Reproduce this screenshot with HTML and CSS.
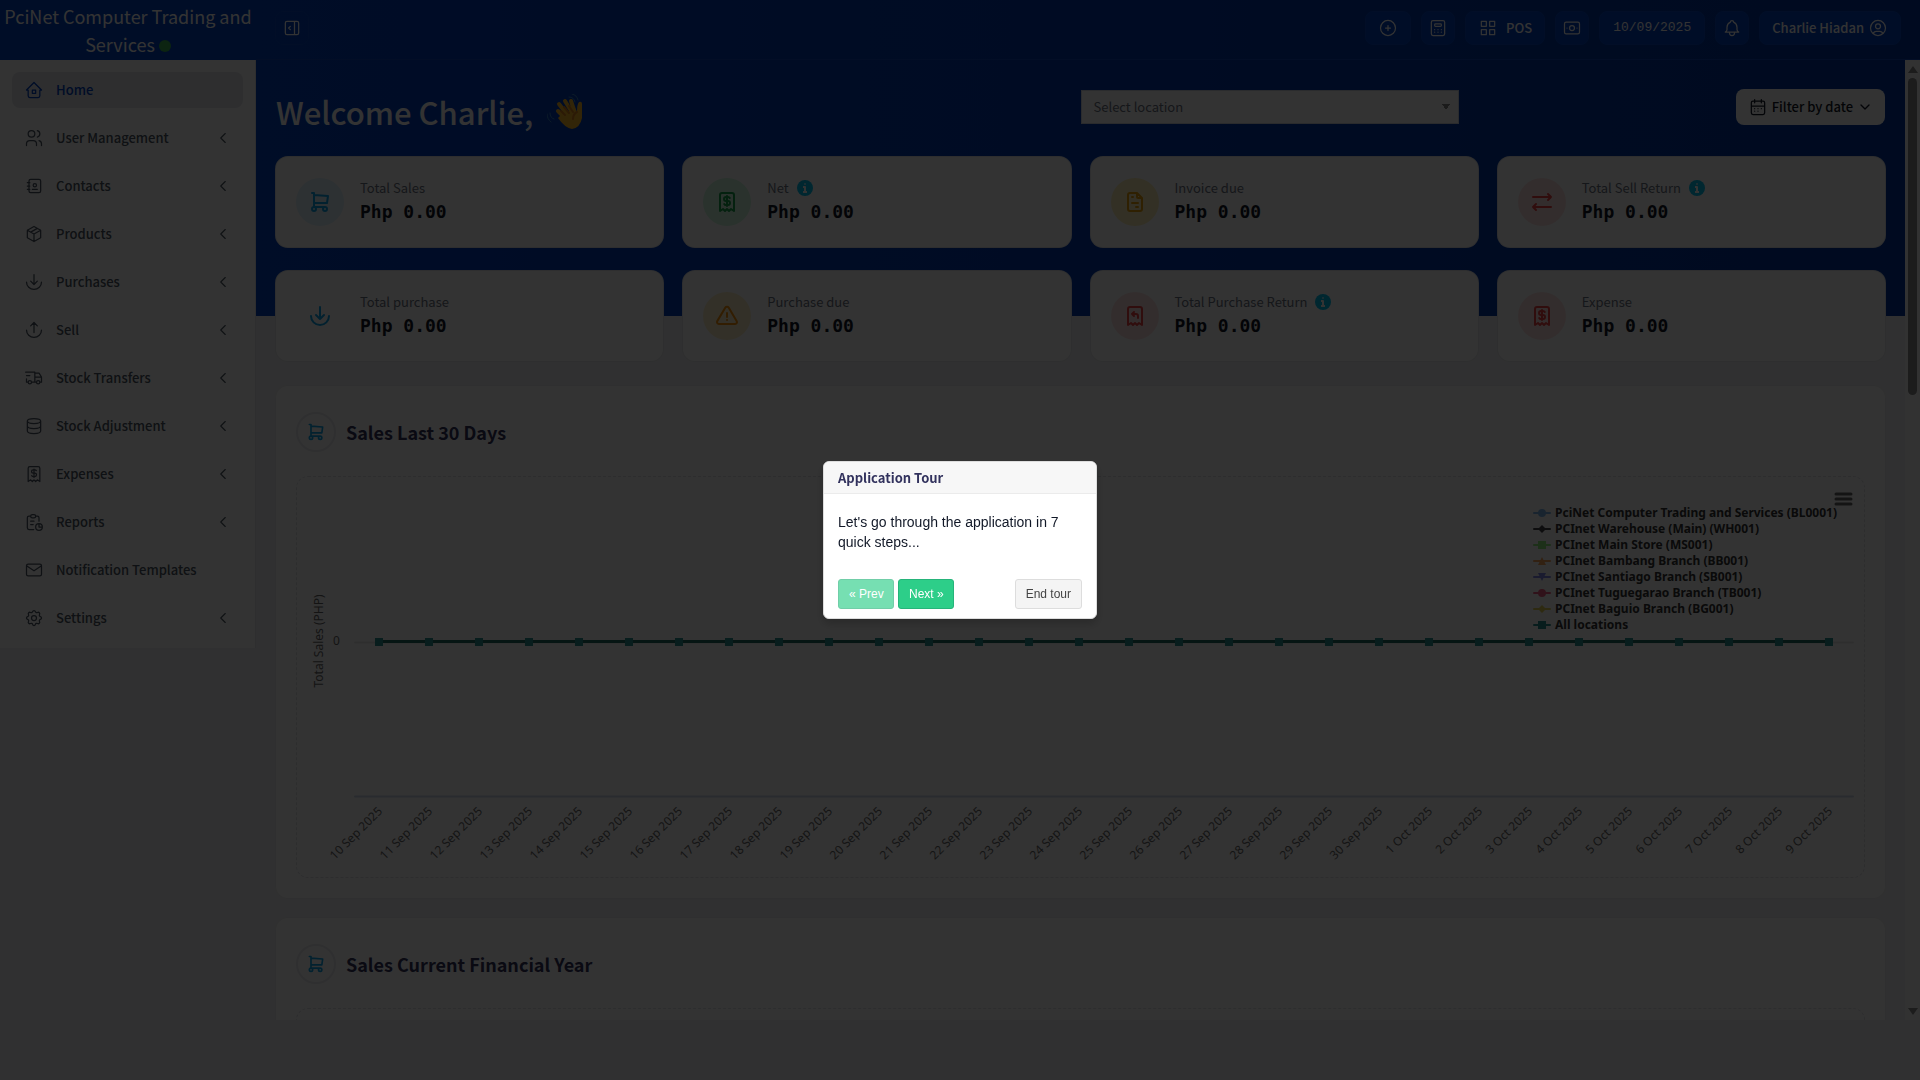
FILE: index.html
```html
<!DOCTYPE html>
<html lang="en">
<head>
<meta charset="utf-8">
<meta name="viewport" content="width=device-width, initial-scale=1">
<title>Home - PciNet Computer Trading and Services</title>
<link rel="stylesheet" href="styles.css">
</head>
<body>
<svg class="sprite" aria-hidden="true">
  <symbol id="i-home" viewBox="0 0 24 24"><path d="M5 12H3l9-9 9 9h-2M5 12v7a2 2 0 0 0 2 2h10a2 2 0 0 0 2-2v-7M10 12h4v4h-4z"/></symbol>
  <symbol id="i-users" viewBox="0 0 24 24"><path d="M9 7m-4 0a4 4 0 1 0 8 0a4 4 0 1 0-8 0M3 21v-2a4 4 0 0 1 4-4h4a4 4 0 0 1 4 4v2M16 3.130a4 4 0 0 1 0 7.750M21 21v-2a4 4 0 0 0-3-3.850"/></symbol>
  <symbol id="i-book" viewBox="0 0 24 24"><path d="M20 6v12a2 2 0 0 1-2 2H8a2 2 0 0 1-2-2V6a2 2 0 0 1 2-2h10a2 2 0 0 1 2 2zM10 16h6M13 11m-2 0a2 2 0 1 0 4 0a2 2 0 1 0-4 0M4 8h3M4 12h3M4 16h3"/></symbol>
  <symbol id="i-box" viewBox="0 0 24 24"><path d="M12 3l8 4.500v9L12 21l-8-4.500v-9zM12 12l8-4.500M12 12v9M12 12L4 7.500M16 5.250l-8 4.500"/></symbol>
  <symbol id="i-down" viewBox="0 0 24 24"><path d="M12 3v12M16 11l-4 4-4-4M3 12a9 9 0 0 0 18 0"/></symbol>
  <symbol id="i-up" viewBox="0 0 24 24"><path d="M12 15V3M16 7l-4-4-4 4M3 12a9 9 0 0 0 18 0"/></symbol>
  <symbol id="i-truck" viewBox="0 0 24 24"><path d="M7 17m-2 0a2 2 0 1 0 4 0a2 2 0 1 0-4 0M17 17m-2 0a2 2 0 1 0 4 0a2 2 0 1 0-4 0M5 17H3v-4M2 5h11v12M9 17h6M19 17h2v-6h-8M13 6h5l3 5M3 9h4"/></symbol>
  <symbol id="i-db" viewBox="0 0 24 24"><path d="M12 6m-8 0a8 3 0 1 0 16 0a8 3 0 1 0-16 0M4 6v6a8 3 0 0 0 16 0V6M4 12v6a8 3 0 0 0 16 0v-6"/></symbol>
  <symbol id="i-receipt" viewBox="0 0 24 24"><path d="M5 21V5a2 2 0 0 1 2-2h10a2 2 0 0 1 2 2v16l-3-2-2 2-2-2-2 2-2-2zM14.800 8A2 2 0 0 0 13 7h-2a2 2 0 1 0 0 4h2a2 2 0 1 1 0 4h-2a2 2 0 0 1-1.800-1M12 6v10"/></symbol>
  <symbol id="i-refund" viewBox="0 0 24 24"><path d="M5 21V5a2 2 0 0 1 2-2h10a2 2 0 0 1 2 2v16l-3-2-2 2-2-2-2 2-2-2zM15 14v-2a2 2 0 0 0-2-2H9l2-2M11 12l-2-2"/></symbol>
  <symbol id="i-report" viewBox="0 0 24 24"><path d="M8 5H6a2 2 0 0 0-2 2v12a2 2 0 0 0 2 2h5.700M18 14v4h4M18 11V7a2 2 0 0 0-2-2h-2M8 5a2 2 0 0 1 2-2h2a2 2 0 0 1 0 4h-2a2 2 0 0 1-2-2M18 18m-4 0a4 4 0 1 0 8 0a4 4 0 1 0-8 0M8 11h4M8 15h3"/></symbol>
  <symbol id="i-mail" viewBox="0 0 24 24"><path d="M5 5h14a2 2 0 0 1 2 2v10a2 2 0 0 1-2 2H5a2 2 0 0 1-2-2V7a2 2 0 0 1 2-2zM3 7l9 6 9-6"/></symbol>
  <symbol id="i-gear" viewBox="0 0 24 24"><path d="M10.325 4.317c.426-1.756 2.924-1.756 3.350 0a1.724 1.724 0 0 0 2.573 1.066c1.543-.940 3.310.826 2.370 2.370a1.724 1.724 0 0 0 1.065 2.572c1.756.426 1.756 2.924 0 3.350a1.724 1.724 0 0 0-1.066 2.573c.940 1.543-.826 3.310-2.370 2.370a1.724 1.724 0 0 0-2.572 1.065c-.426 1.756-2.924 1.756-3.350 0a1.724 1.724 0 0 0-2.573-1.066c-1.543.940-3.310-.826-2.370-2.370a1.724 1.724 0 0 0-1.065-2.572c-1.756-.426-1.756-2.924 0-3.350a1.724 1.724 0 0 0 1.066-2.573c-.940-1.543.826-3.310 2.370-2.370c1 .608 2.296.070 2.572-1.065zM9 12a3 3 0 1 0 6 0a3 3 0 0 0-6 0"/></symbol>
  <symbol id="i-left" viewBox="0 0 24 24"><path d="M15 6l-6 6 6 6"/></symbol>
  <symbol id="i-chev" viewBox="0 0 24 24"><path d="M6 9l6 6 6-6"/></symbol>
  <symbol id="i-panel" viewBox="0 0 24 24"><path d="M6 4h12a2 2 0 0 1 2 2v12a2 2 0 0 1-2 2H6a2 2 0 0 1-2-2V6a2 2 0 0 1 2-2zM15 4v16M10 10l-2 2 2 2"/></symbol>
  <symbol id="i-plus" viewBox="0 0 24 24"><path d="M3 12a9 9 0 1 0 18 0a9 9 0 1 0-18 0M9 12h6M12 9v6"/></symbol>
  <symbol id="i-calc" viewBox="0 0 24 24"><path d="M6 3h12a2 2 0 0 1 2 2v14a2 2 0 0 1-2 2H6a2 2 0 0 1-2-2V5a2 2 0 0 1 2-2zM9 7h6a1 1 0 0 1 1 1v1a1 1 0 0 1-1 1H9a1 1 0 0 1-1-1V8a1 1 0 0 1 1-1zM8 14v.010M12 14v.010M16 14v.010M8 17v.010M12 17v.010M16 17v.010"/></symbol>
  <symbol id="i-grid" viewBox="0 0 24 24"><path d="M4 4h6v6H4zM14 4h6v6h-6zM4 14h6v6H4zM14 14h6v6h-6z"/></symbol>
  <symbol id="i-cash" viewBox="0 0 24 24"><path d="M5 5h14a2 2 0 0 1 2 2v10a2 2 0 0 1-2 2H5a2 2 0 0 1-2-2V7a2 2 0 0 1 2-2zM9 12a3 3 0 1 0 6 0a3 3 0 1 0-6 0M6 12v.010M18 12v.010"/></symbol>
  <symbol id="i-bell" viewBox="0 0 24 24"><path d="M10 5a2 2 0 1 1 4 0a7 7 0 0 1 4 6v3a4 4 0 0 0 2 3H4a4 4 0 0 0 2-3v-3a7 7 0 0 1 4-6M9 17v1a3 3 0 0 0 6 0v-1"/></symbol>
  <symbol id="i-user" viewBox="0 0 24 24"><path d="M3 12a9 9 0 1 0 18 0a9 9 0 1 0-18 0M9 10a3 3 0 1 0 6 0a3 3 0 1 0-6 0M6.168 18.849A4 4 0 0 1 10 16h4a4 4 0 0 1 3.834 2.855"/></symbol>
  <symbol id="i-cal" viewBox="0 0 24 24"><path d="M6 5h12a2 2 0 0 1 2 2v12a2 2 0 0 1-2 2H6a2 2 0 0 1-2-2V7a2 2 0 0 1 2-2zM16 3v4M8 3v4M4 11h16M8 14v.010M12 14v.010M16 14v.010M8 17v.010M12 17v.010"/></symbol>
  <symbol id="i-cart" viewBox="0 0 24 24"><path d="M4 19a2 2 0 1 0 4 0a2 2 0 1 0-4 0M15 19a2 2 0 1 0 4 0a2 2 0 1 0-4 0M17 17H6V3H4M6 5l14 1-1 7H6"/></symbol>
  <symbol id="i-doc" viewBox="0 0 24 24"><path d="M14 3v4a1 1 0 0 0 1 1h4M17 21H7a2 2 0 0 1-2-2V5a2 2 0 0 1 2-2h7l5 5v11a2 2 0 0 1-2 2zM9 7h1M9 13h6M13 17h2"/></symbol>
  <symbol id="i-swap" viewBox="0 0 24 24"><path d="M21 7H3M18 10l3-3-3-3M6 20l-3-3 3-3M3 17h18"/></symbol>
  <symbol id="i-warn" viewBox="0 0 24 24"><path d="M12 9v4M10.363 3.591L2.257 17.125a1.914 1.914 0 0 0 1.636 2.871h16.214a1.914 1.914 0 0 0 1.636-2.870L13.637 3.590a1.914 1.914 0 0 0-3.274 0zM12 16h.010"/></symbol>
  <symbol id="i-info" viewBox="0 0 16 16"><circle cx="8" cy="8" r="8" fill="#00c0ef" stroke="none"/><path d="M6 7h2v5M6 12h4M8 3.500v1" stroke="#fff" stroke-width="2" stroke-linecap="butt"/></symbol>
</svg>

<div class="app">
  <aside class="sidebar">
    <a class="brand" href="#">PciNet Computer Trading and Services <span class="status"></span></a>
    <nav class="menu">
      <a class="item active" href="#"><svg class="icon"><use href="#i-home"/></svg><span>Home</span></a>
      <a class="item" href="#"><svg class="icon"><use href="#i-users"/></svg><span>User Management</span><svg class="icon caret"><use href="#i-left"/></svg></a>
      <a class="item" href="#"><svg class="icon"><use href="#i-book"/></svg><span>Contacts</span><svg class="icon caret"><use href="#i-left"/></svg></a>
      <a class="item" href="#"><svg class="icon"><use href="#i-box"/></svg><span>Products</span><svg class="icon caret"><use href="#i-left"/></svg></a>
      <a class="item" href="#"><svg class="icon"><use href="#i-down"/></svg><span>Purchases</span><svg class="icon caret"><use href="#i-left"/></svg></a>
      <a class="item" href="#"><svg class="icon"><use href="#i-up"/></svg><span>Sell</span><svg class="icon caret"><use href="#i-left"/></svg></a>
      <a class="item" href="#"><svg class="icon"><use href="#i-truck"/></svg><span>Stock Transfers</span><svg class="icon caret"><use href="#i-left"/></svg></a>
      <a class="item" href="#"><svg class="icon"><use href="#i-db"/></svg><span>Stock Adjustment</span><svg class="icon caret"><use href="#i-left"/></svg></a>
      <a class="item" href="#"><svg class="icon"><use href="#i-receipt"/></svg><span>Expenses</span><svg class="icon caret"><use href="#i-left"/></svg></a>
      <a class="item" href="#"><svg class="icon"><use href="#i-report"/></svg><span>Reports</span><svg class="icon caret"><use href="#i-left"/></svg></a>
      <a class="item" href="#"><svg class="icon"><use href="#i-mail"/></svg><span>Notification Templates</span></a>
      <a class="item" href="#"><svg class="icon"><use href="#i-gear"/></svg><span>Settings</span><svg class="icon caret"><use href="#i-left"/></svg></a>
    </nav>
  </aside>

  <div class="page">
    <header class="topbar">
      <button class="tool ghost" aria-label="Toggle sidebar"><svg class="icon"><use href="#i-panel"/></svg></button>
      <div class="tools">
        <button class="tool wide" aria-label="Add"><svg class="icon"><use href="#i-plus"/></svg></button>
        <button class="tool" aria-label="Calculator"><svg class="icon"><use href="#i-calc"/></svg></button>
        <button class="tool pos"><svg class="icon"><use href="#i-grid"/></svg>POS</button>
        <button class="tool" aria-label="Today's profit"><svg class="icon"><use href="#i-cash"/></svg></button>
        <button class="tool date">10/09/2025</button>
        <button class="tool" aria-label="Notifications"><svg class="icon"><use href="#i-bell"/></svg></button>
        <button class="tool user">Charlie Hiadan<svg class="icon"><use href="#i-user"/></svg></button>
      </div>
    </header>

    <div class="scroller">
      <main class="content">
        <section class="hero">
          <div class="welcome">
            <h1>Welcome Charlie,</h1>
            <svg class="wave" viewBox="0 0 36 36" aria-hidden="true">
              <g fill="none" stroke="#3b88c3" stroke-width="1" stroke-linecap="round"><path d="M22 3q5 0 6 5M25 0q5 1 6 6M3 19q0 5 4 6M0 20q0 5 4 8"/></g>
              <g fill="none" stroke="#fbb829" stroke-width="4" stroke-linecap="round"><path d="M11 17l9 9M12 10l10 13M18 7l8 13M24 7l4 12"/></g>
              <path fill="#fbb829" d="M13 22L28 14l2 4q0-8 2-10 3-1 3 2l0 14q-2 10-10 11-7-1-14-11z"/>
              <path fill="none" stroke="#d9801f" d="M14 17l4 4M17 13l5 6M22 12l4 6M30 18q-4 2-4 7"/>
            </svg>
          </div>
          <select class="location" aria-label="Location"><option>Select location</option></select>
          <div class="filter-wrap"><button class="filter"><svg class="icon"><use href="#i-cal"/></svg>Filter by date<svg class="icon small"><use href="#i-chev"/></svg></button></div>
        </section>

        <section class="stats">
          <article class="stat"><span class="badge sky"><svg><use href="#i-cart"/></svg></span><div><p class="label">Total Sales</p><p class="value">Php 0.00</p></div></article>
          <article class="stat"><span class="badge green"><svg><use href="#i-receipt"/></svg></span><div><p class="label">Net <svg class="info"><use href="#i-info"/></svg></p><p class="value">Php 0.00</p></div></article>
          <article class="stat"><span class="badge yellow"><svg><use href="#i-doc"/></svg></span><div><p class="label">Invoice due</p><p class="value">Php 0.00</p></div></article>
          <article class="stat"><span class="badge red"><svg><use href="#i-swap"/></svg></span><div><p class="label">Total Sell Return <svg class="info"><use href="#i-info"/></svg></p><p class="value">Php 0.00</p></div></article>
          <article class="stat"><span class="badge plain"><svg><use href="#i-down"/></svg></span><div><p class="label">Total purchase</p><p class="value">Php 0.00</p></div></article>
          <article class="stat"><span class="badge orange"><svg><use href="#i-warn"/></svg></span><div><p class="label">Purchase due</p><p class="value">Php 0.00</p></div></article>
          <article class="stat"><span class="badge red"><svg><use href="#i-refund"/></svg></span><div><p class="label">Total Purchase Return <svg class="info"><use href="#i-info"/></svg></p><p class="value">Php 0.00</p></div></article>
          <article class="stat"><span class="badge red"><svg><use href="#i-receipt"/></svg></span><div><p class="label">Expense</p><p class="value">Php 0.00</p></div></article>
        </section>

        <section class="panel">
          <div class="panel-head"><span class="ring"><svg class="icon"><use href="#i-cart"/></svg></span><h2>Sales Last 30 Days</h2></div>
          <div class="chart-box">
            <svg class="chart" viewBox="0 0 1567 400">
              <path class="gridline" d="M58 165.500H1556"/>
              <path class="axis" d="M58 319.500H1556"/>
              <path class="series" d="M82 164.500H1532"/>
              <path class="points" d="M78 165H1536"/>
              <text class="axis-title" text-anchor="middle" transform="translate(26 164) rotate(-90)">Total Sales (PHP)</text>
              <text class="tick" x="36" y="168">0</text>
              <g class="tick" text-anchor="end">
                <text transform="translate(86 335) rotate(-45)">10 Sep 2025</text>
                <text transform="translate(136 335) rotate(-45)">11 Sep 2025</text>
                <text transform="translate(186 335) rotate(-45)">12 Sep 2025</text>
                <text transform="translate(236 335) rotate(-45)">13 Sep 2025</text>
                <text transform="translate(286 335) rotate(-45)">14 Sep 2025</text>
                <text transform="translate(336 335) rotate(-45)">15 Sep 2025</text>
                <text transform="translate(386 335) rotate(-45)">16 Sep 2025</text>
                <text transform="translate(436 335) rotate(-45)">17 Sep 2025</text>
                <text transform="translate(486 335) rotate(-45)">18 Sep 2025</text>
                <text transform="translate(536 335) rotate(-45)">19 Sep 2025</text>
                <text transform="translate(586 335) rotate(-45)">20 Sep 2025</text>
                <text transform="translate(636 335) rotate(-45)">21 Sep 2025</text>
                <text transform="translate(686 335) rotate(-45)">22 Sep 2025</text>
                <text transform="translate(736 335) rotate(-45)">23 Sep 2025</text>
                <text transform="translate(786 335) rotate(-45)">24 Sep 2025</text>
                <text transform="translate(836 335) rotate(-45)">25 Sep 2025</text>
                <text transform="translate(886 335) rotate(-45)">26 Sep 2025</text>
                <text transform="translate(936 335) rotate(-45)">27 Sep 2025</text>
                <text transform="translate(986 335) rotate(-45)">28 Sep 2025</text>
                <text transform="translate(1036 335) rotate(-45)">29 Sep 2025</text>
                <text transform="translate(1086 335) rotate(-45)">30 Sep 2025</text>
                <text transform="translate(1136 335) rotate(-45)">1 Oct 2025</text>
                <text transform="translate(1186 335) rotate(-45)">2 Oct 2025</text>
                <text transform="translate(1236 335) rotate(-45)">3 Oct 2025</text>
                <text transform="translate(1286 335) rotate(-45)">4 Oct 2025</text>
                <text transform="translate(1336 335) rotate(-45)">5 Oct 2025</text>
                <text transform="translate(1386 335) rotate(-45)">6 Oct 2025</text>
                <text transform="translate(1436 335) rotate(-45)">7 Oct 2025</text>
                <text transform="translate(1486 335) rotate(-45)">8 Oct 2025</text>
                <text transform="translate(1536 335) rotate(-45)">9 Oct 2025</text>
              </g>
              <path class="burger" d="M1539 17h15M1539 22h15M1539 27h15"/>
              <g class="legend" stroke-width="2">
                <g fill="#7cb5ec" stroke="#7cb5ec"><path d="M1237 36h16"/><circle cx="1245" cy="36" r="3"/></g>
                <g fill="#434348" stroke="#434348"><path d="M1237 52h16"/><path stroke="none" d="M1245 48l4 4-4 4-4-4z"/></g>
                <g fill="#90ed7d" stroke="#90ed7d"><path d="M1237 68h16"/><path stroke="none" d="M1241 64h8v8h-8z"/></g>
                <g fill="#f7a35c" stroke="#f7a35c"><path d="M1237 84h16"/><path stroke="none" d="M1245 80l4 8h-8z"/></g>
                <g fill="#8085e9" stroke="#8085e9"><path d="M1237 100h16"/><path stroke="none" d="M1241 96h8l-4 8z"/></g>
                <g fill="#f15c80" stroke="#f15c80"><path d="M1237 116h16"/><circle cx="1245" cy="116" r="3"/></g>
                <g fill="#e4d354" stroke="#e4d354"><path d="M1237 132h16"/><path stroke="none" d="M1245 128l4 4-4 4-4-4z"/></g>
                <g fill="#2b908f" stroke="#2b908f"><path d="M1237 148h16"/><path stroke="none" d="M1241 144h8v8h-8z"/></g>
                <text x="1258" y="40">PciNet Computer Trading and Services (BL0001)</text>
                <text x="1258" y="56">PCInet Warehouse (Main) (WH001)</text>
                <text x="1258" y="72">PCInet Main Store (MS001)</text>
                <text x="1258" y="88">PCInet Bambang Branch (BB001)</text>
                <text x="1258" y="104">PCInet Santiago Branch (SB001)</text>
                <text x="1258" y="120">PCInet Tuguegarao Branch (TB001)</text>
                <text x="1258" y="136">PCInet Baguio Branch (BG001)</text>
                <text x="1258" y="152">All locations</text>
              </g>
            </svg>
          </div>
        </section>

        <section class="panel">
          <div class="panel-head"><span class="ring"><svg class="icon"><use href="#i-cart"/></svg></span><h2>Sales Current Financial Year</h2></div>
          <div class="chart-box empty"></div>
        </section>
      </main>
      <div class="track" aria-hidden="true"><i class="arrow up"></i><i class="thumb"></i><i class="arrow down"></i></div>
    </div>
  </div>
</div>

<div class="backdrop">
  <div class="tour" role="dialog" aria-labelledby="tour-title">
    <h3 id="tour-title">Application Tour</h3>
    <p>Let's go through the application in 7 quick steps...</p>
    <div class="tour-nav">
      <button class="btn go" disabled>« Prev</button>
      <button class="btn go">Next »</button>
      <button class="btn end">End tour</button>
    </div>
  </div>
</div>
</body>
</html>
```
FILE: styles.css
```css
* { box-sizing: border-box; }

body {
  margin: 0;
  background: #f1f1f2;
  color: #111827;
  font: 13px/20px "Noto Sans CJK SC", "Noto Sans", sans-serif;
  overflow: hidden;
}

h1, h2, h3, p { margin: 0; }
button, select { font: inherit; cursor: pointer; }
a { text-decoration: none; }

.sprite { position: absolute; width: 0; height: 0; }

svg {
  fill: none;
  stroke: currentColor;
  stroke-width: 2;
  stroke-linecap: round;
  stroke-linejoin: round;
}
.chart, .wave { stroke: none; }
svg text { stroke: none; }

.icon { width: 20px; height: 20px; flex: none; stroke-width: 1.5; }
.icon.caret { width: 18px; height: 18px; }
.icon.small { width: 16px; height: 16px; stroke-width: 2; }

/* Frame */
.app { display: flex; height: 100vh; }
.page { flex: 1; min-width: 0; display: flex; flex-direction: column; padding-bottom: 60px; }

/* Sidebar */
.sidebar { width: 256px; flex: none; }
.brand {
  display: block;
  height: 60px;
  padding: 2px 0;
  background: #0040c1;
  color: #fff;
  font-size: 18px;
  line-height: 28px;
  text-align: center;
}
.status {
  display: inline-block;
  width: 12px;
  height: 12px;
  border-radius: 50%;
  background: #3cb454;
}
.menu {
  display: flex;
  flex-direction: column;
  gap: 12px;
  padding: 12px;
  background: #fff;
  border-right: 1px solid #e5e7eb;
}
.item {
  display: flex;
  align-items: center;
  gap: 12px;
  height: 36px;
  padding: 0 11px 0 12px;
  border-radius: 8px;
  color: #4b5563;
  font-weight: 500;
  white-space: nowrap;
}
.item span { flex: 1; }
.item.active { background: #e3e6ec; color: #0040c1; }

/* Top bar */
.topbar {
  display: flex;
  align-items: center;
  justify-content: space-between;
  flex: none;
  height: 60px;
  padding: 0 19px 3px;
  background: linear-gradient(to right, #0040c1, #00359e);
  border-bottom: 1px solid #1249bd;
}
.tools { display: flex; gap: 10px; }
.tool {
  display: flex;
  align-items: center;
  justify-content: center;
  width: 34px;
  height: 34px;
  padding: 0;
  border: 1px solid #0a49c4;
  border-radius: 8px;
  background: #0040c1;
  color: #fff;
  font-weight: 500;
  white-space: nowrap;
}
.tool.ghost { background: none; }
.tool.wide { width: 46px; }
.tool.pos { width: auto; padding: 0 12px; gap: 8px; }
.tool.date { width: auto; padding: 0 13px; font: 13px/20px "Liberation Mono", monospace; }
.tool.user { width: auto; padding: 0 12px; gap: 4px; }

/* Scrolling area */
.scroller { flex: 1; min-height: 0; display: flex; overflow: hidden; }
.content {
  flex: 1;
  min-width: 0;
  padding: 0 20px;
  overflow: hidden;
  background: linear-gradient(to right, #0040c1, #00359e) top / 100% 256px no-repeat;
}
.track {
  display: flex;
  flex-direction: column;
  align-items: center;
  width: 15px;
  background: #fbfbfb;
}
.arrow { border: 5px solid transparent; }
.arrow.up { margin-top: 1px; border-bottom: 7px solid #8b8b8b; }
.arrow.down { margin: auto 0 0; border-top: 7px solid #8b8b8b; }
.thumb { width: 9px; height: 33%; margin-top: 5px; border-radius: 5px; background: #8b8b8b; }

/* Greeting row */
.hero {
  display: grid;
  grid-template-columns: 50% 378px 1fr;
  align-items: start;
  height: 97px;
  padding-top: 29px;
}
.welcome { display: flex; align-items: center; gap: 14px; height: 46px; color: #fff; }
.welcome h1 { font-size: 31px; line-height: 44px; font-weight: 500; white-space: nowrap; }
.wave { width: 36px; height: 36px; }
.location {
  appearance: none;
  height: 34px;
  margin-top: 1px;
  padding: 0 12px;
  border: 1px solid #d2d6de;
  border-radius: 0;
  color: #6b7280;
  background:
    linear-gradient(to bottom right, #888 50%, transparent 50%) right 8px center / 4px 6px no-repeat,
    linear-gradient(to bottom left, #888 50%, transparent 50%) right 12px center / 4px 6px no-repeat,
    #fff;
}
.filter-wrap { display: flex; justify-content: flex-end; }
.filter {
  display: flex;
  align-items: center;
  gap: 4px;
  height: 36px;
  padding: 0 12px;
  border: 0;
  border-radius: 8px;
  background: #fff;
  color: #111827;
  font-weight: 500;
  white-space: nowrap;
}

/* Figures */
.stats { display: grid; grid-template-columns: repeat(4, minmax(0, 1fr)); gap: 24px 20px; }
.stat {
  display: flex;
  align-items: center;
  gap: 16px;
  height: 90px;
  padding: 0 20px;
  border-radius: 12px;
  background: #fff;
  box-shadow: 0 0 0 1px #e5e7eb;
}
.badge {
  display: grid;
  place-items: center;
  width: 48px;
  height: 48px;
  border-radius: 50%;
}
.badge svg { width: 24px; height: 24px; }
.sky { background: #e0f2fe; color: #0ea5e9; }
.green { background: #d1fadf; color: #16a34a; }
.yellow { background: #fef0b8; color: #eaa008; }
.orange { background: #fef0c7; color: #f79009; }
.red { background: #fee2e2; color: #ef4444; }
.plain { color: #0ea5e9; }
.label { display: flex; align-items: center; gap: 8px; color: #6b7280; line-height: 20px; }
.info { width: 16px; height: 16px; }
.value { font: bold 18px/28px "DejaVu Sans Mono", monospace; }

/* Chart cards */
.panel {
  margin-top: 20px;
  padding: 26px 20px 20px;
  border-radius: 12px;
  background: #fff;
  box-shadow: 0 0 0 1px #ececee;
}
.stats + .panel { margin-top: 25px; }
.panel-head { display: flex; align-items: center; gap: 10px; height: 40px; }
.ring {
  display: grid;
  place-items: center;
  width: 40px;
  height: 40px;
  border: 2px solid #e9eaee;
  border-radius: 50%;
  color: #0ea5e9;
}
.ring .icon { stroke-width: 2; }
.panel h2 { font-size: 18px; line-height: 28px; font-weight: 700; color: #32325d; }
.chart-box { margin-top: 24px; border: 1px dashed #dfe1e6; border-radius: 12px; }
.chart-box.empty { height: 400px; }
.chart { display: block; width: 100%; height: auto; font-family: "Noto Sans", sans-serif; }
.gridline { stroke: #e6e6e6; }
.axis { stroke: #ccd6eb; }
.series { stroke: #1f6b62; stroke-width: 3; }
.points { stroke: #2b908f; stroke-width: 8; stroke-linecap: butt; stroke-dasharray: 8 42; }
.axis-title, .tick { font-size: 12px; fill: #666; }
.burger { stroke: #666; stroke-width: 3; }
.legend text { font-size: 12px; font-weight: 700; fill: #333; }

/* Guided tour */
.backdrop {
  position: fixed;
  inset: 0;
  display: flex;
  align-items: center;
  justify-content: center;
  background: rgba(0, 0, 0, 0.8);
}
.tour {
  width: 274px;
  border: 1px solid #ddd;
  border-radius: 6px;
  background: #fff;
  box-shadow: 0 5px 10px rgba(0, 0, 0, 0.2);
  overflow: hidden;
}
.tour h3 {
  padding: 6px 14px;
  border-bottom: 1px solid #ebebeb;
  background: #f7f7f7;
  color: #32325d;
  font-size: 13px;
  line-height: 19px;
  font-weight: 700;
}
.tour p { padding: 18px 14px 20px; font: 14px/20px "Liberation Sans", sans-serif; }
.tour-nav { display: flex; gap: 4px; padding: 7px 14px 9px; }
.btn {
  height: 30px;
  padding: 0 10px;
  border: 1px solid #26b47a;
  border-radius: 3px;
  font: 12px/18px "Liberation Sans", sans-serif;
  white-space: nowrap;
}
.go { width: 56px; background: #2dce89; color: #fff; }
.go:disabled { opacity: 0.65; }
.end { margin-left: auto; background: #f4f4f4; border-color: #ddd; color: #444; }
```
